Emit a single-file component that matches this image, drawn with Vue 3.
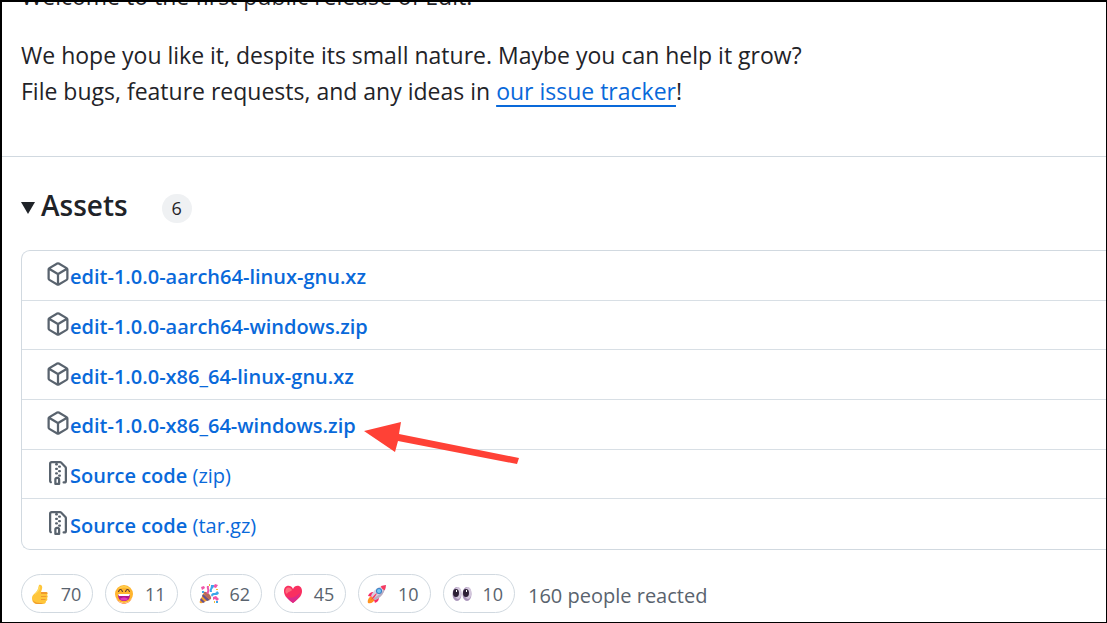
<template>
	<main class="release">
		<section class="notes">
			<p>Welcome to the first public release of Edit.</p>
			<p>
				We hope you like it, despite its small nature. Maybe you can help it grow?<br />
				File bugs, feature requests, and any ideas in
				<a href="#issues">our issue tracker</a>!
			</p>
		</section>

		<section class="release-footer">
			<details class="assets" open>
				<summary>
					<svg class="caret" viewBox="0 0 14 12" aria-hidden="true">
						<path d="M0 0h14L7 12z" />
					</svg>
					<h2>Assets</h2>
					<span class="counter">6</span>
				</summary>
				<ul class="asset-list">
					<li v-for="asset in assets" :key="asset.name + asset.format">
						<svg class="asset-icon" viewBox="0 0 16 16" aria-hidden="true">
							<path :d="icons[asset.icon]" />
						</svg>
						<a href="#download">
							<strong>{{ asset.name }}</strong>
							<span v-if="asset.format"> ({{ asset.format }})</span>
						</a>
						<svg v-if="asset.marked" class="arrow" viewBox="0 0 156 40" aria-hidden="true">
							<path d="M0 10 37 1 35 13 155 37 153 43 34 20 31 31z" />
						</svg>
					</li>
				</ul>
			</details>

			<div class="reactions">
				<div class="reaction-list">
					<button
						v-for="reaction in reactions"
						:key="reaction.name"
						type="button"
						:aria-label="reaction.name + ' ' + reaction.count"
					>
						<svg viewBox="0 0 20 20" aria-hidden="true">
							<path
								v-for="(shape, index) in reaction.shapes"
								:key="index"
								:d="shape[1]"
								:fill="shape[0]"
							/>
						</svg>
						<span>{{ reaction.count }}</span>
					</button>
				</div>
				<span class="total">160 people reacted</span>
			</div>
		</section>
	</main>
</template>

<script setup>
import { ref } from 'vue'

const icons = {
	package:
		'm8.878.392 5.25 3.045c.54.314.872.89.872 1.514v6.098a1.75 1.75 0 0 1-.872 1.514l-5.25 3.045a1.75 1.75 0 0 1-1.756 0l-5.25-3.045A1.75 1.75 0 0 1 1 11.049V4.951c0-.624.332-1.201.872-1.514L7.122.392a1.75 1.75 0 0 1 1.756 0ZM7.875 1.69l-4.63 2.685L8 7.133l4.755-2.758-4.63-2.685a.248.248 0 0 0-.25 0ZM2.5 5.677v5.372c0 .09.047.171.125.216l4.625 2.683V8.432Zm6.25 8.271 4.625-2.683a.25.25 0 0 0 .125-.216V5.677L8.75 8.432Z',
	zip: 'M3.5 1.75v11.5c0 .09.048.173.126.217a.75.75 0 0 1-.752 1.298A1.748 1.748 0 0 1 2 13.25V1.75C2 .784 2.784 0 3.75 0h5.586c.464 0 .909.185 1.237.513l2.914 2.914c.329.328.513.773.513 1.237v8.586A1.75 1.75 0 0 1 12.25 15h-.5a.75.75 0 0 1 0-1.5h.5a.25.25 0 0 0 .25-.25V4.664a.25.25 0 0 0-.073-.177L9.513 1.573a.25.25 0 0 0-.177-.073H7.25a.75.75 0 0 1 0 1.5h-.5a.75.75 0 0 1 0-1.5h-3a.25.25 0 0 0-.25.25Zm3.75 8.75h.5c.966 0 1.75.784 1.75 1.75v3a.75.75 0 0 1-.75.75h-2.5a.75.75 0 0 1-.75-.75v-3c0-.966.784-1.75 1.75-1.75ZM6 5.25a.75.75 0 0 1 .75-.75h.5a.75.75 0 0 1 0 1.5h-.5A.75.75 0 0 1 6 5.25Zm.75 2.25h.5a.75.75 0 0 1 0 1.5h-.5a.75.75 0 0 1 0-1.5ZM8 6.75A.75.75 0 0 1 8.75 6h.5a.75.75 0 0 1 0 1.5h-.5A.75.75 0 0 1 8 6.75ZM8.75 3h.5a.75.75 0 0 1 0 1.5h-.5a.75.75 0 0 1 0-1.5ZM8 9.75A.75.75 0 0 1 8.75 9h.5a.75.75 0 0 1 0 1.5h-.5A.75.75 0 0 1 8 9.75Zm-1 2.5v2.25h1v-2.25a.25.25 0 0 0-.25-.25h-.5a.25.25 0 0 0-.25.25Z',
}

const assets = ref([
	{ name: 'edit-1.0.0-aarch64-linux-gnu.xz', icon: 'package' },
	{ name: 'edit-1.0.0-aarch64-windows.zip', icon: 'package' },
	{ name: 'edit-1.0.0-x86_64-linux-gnu.xz', icon: 'package' },
	{ name: 'edit-1.0.0-x86_64-windows.zip', icon: 'package', marked: true },
	{ name: 'Source code', format: 'zip', icon: 'zip' },
	{ name: 'Source code', format: 'tar.gz', icon: 'zip' },
])

// shapes: [fill, path], drawn back to front
const reactions = ref([
	{
		name: 'thumbs up',
		count: 70,
		shapes: [
			['#ffc63b', 'M9 1c2-1 4 1 3 4l-1 3h5c2 0 2 2 1 3 1 1 1 2 0 3 1 1 0 3-1 3 0 2-1 3-3 3H8c-4 0-6-2-6-6 0-4 5-5 6-9z'],
			['#f09a2e', 'M11 8h5c1 0 2 1 1 2h-6zM11 12h6l-1 1h-5zM11 15h5l-1 1h-4zM3 16c2 3 5 3 10 3-1 1-2 1-5 1-3 0-5-2-5-4z'],
			['#ffdb62', 'M9 2l1 1c0 4-3 5-5 8-1-1 3-4 4-9z'],
		],
	},
	{
		name: 'laugh',
		count: 11,
		shapes: [
			['#ffb52e', 'M10 1a9 9 0 1 0 0 18 9 9 0 0 0 0-18z'],
			['#ff863f', 'M2 13c2 8 14 8 16 0-1 9-15 9-16 0z'],
			['#ffd150', 'M4 5c3-4 9-4 12 0-4-2-8-2-12 0z'],
			['#4c2e30', 'M4 8c1-4 4-4 5 0H8C7 5 6 5 5 8zM11 8c1-4 4-4 5 0h-1c-1-3-2-3-3 0z'],
			['#b0178e', 'M4 10h12c0 5-2 7-6 7s-6-2-6-7z'],
			['#fff', 'M4 10h12l-1 2H5z'],
			['#e33abc', 'M6 15c2-2 6-2 8 0-2 2-6 2-8 0z'],
		],
	},
	{
		name: 'hooray',
		count: 62,
		shapes: [
			['#f8a12a', 'M5 8l7 7-9 4c-2 1-3-1-2-2z'],
			['#65518f', 'M4 10l7 6-3 1-5-5zM2 14l4 4-2 1-3-3z'],
			['#b56a5c', 'M5 8c3-1 8 4 7 7-2 1-8-4-7-7z'],
			['#ef56a9', 'M2 3l3-1 1 2-3 2zM7 9c3-3 0-4 1-7h2c-1 3 2 4-1 8zM16 0l3 1-2 3-3-1zM14 13l3-1 3 3-2 2-2-2-2 1z'],
			['#39a6ea', 'M11 8c-1-3 1-3 1-7h3c0 4-3 3-2 7zM12 11c2-4 4 0 6-4l2 2c-2 4-5 0-7 4zM3 7h2v2H3zM17 17h2v2h-2z'],
			['#f6b735', 'M10 0h1v2h-1zM17 5h2v1h-2zM15 17h1v2h-1z'],
		],
	},
	{
		name: 'heart',
		count: 45,
		shapes: [
			['#f92f60', 'M10 19C3 14 1 11 1 7c0-6 7-7 9-2 2-5 9-4 9 2 0 4-2 7-9 12z'],
			['#ff6b7d', 'M3 5c2-3 5-1 6 1-1 2-4 1-5 4-2-1-2-3-1-5z'],
			['#db2a8b', 'M10 19c-3-2-5-4-6-6 5 2 9 0 13-4-1 4-3 7-7 10z'],
		],
	},
	{
		name: 'rocket',
		count: 10,
		shapes: [
			['#ff921f', 'M1 19c-1-3 1-6 4-7l3 3c-1 3-4 5-7 4z'],
			['#f72c69', 'M7 8c-4 0-5 2-6 4l5 1zM12 13c0 4-2 5-4 6l-2-6z'],
			['#d9cddf', 'M4 12c2-6 8-10 15-11-1 7-5 13-11 15z'],
			['#b9acc2', 'M6 14c6-2 10-6 13-13-1 7-5 13-11 15z'],
			['#f8395f', 'M14 2l5-1-1 5c-2 0-4-2-4-4zM4 16c2-4 4-6 6-7-1 3-3 5-6 7z'],
			['#347fc4', 'M12 4a3 3 0 1 0 0 6 3 3 0 0 0 0-6z'],
			['#77c8f5', 'M12 5a2 2 0 1 0 0 4 2 2 0 0 0 0-4z'],
		],
	},
	{
		name: 'eyes',
		count: 10,
		shapes: [
			['#a994ba', 'M5 3a4.5 7 0 1 0 0 14 4.5 7 0 0 0 0-14zM15 3a4.5 7 0 1 0 0 14 4.5 7 0 0 0 0-14z'],
			['#d3c6dc', 'M6 3a3.5 6 0 1 0 0 12 3.5 6 0 0 0 0-12zM16 3a3.5 6 0 1 0 0 12 3.5 6 0 0 0 0-12z'],
			['#2d2036', 'M4 5a3 4 0 1 0 0 8 3 4 0 0 0 0-8zM14 5a3 4 0 1 0 0 8 3 4 0 0 0 0-8z'],
			['#fff', 'M4 6h1v2H4zM14 6h1v2h-1z'],
		],
	},
])
</script>

<style>
body {
	margin: 0;
	background: #fff;
}
</style>

<style scoped>
.release {
	box-sizing: border-box;
	min-height: 100vh;
	overflow: hidden;
	border: 1px solid #000;
	border-width: 2px 1px 1px 2px;
	font-family: 'Segoe UI', 'Open Sans', 'Noto Sans', sans-serif;
	color: #1f2328;
}

.notes {
	padding: 0 19px 47px;
	border-bottom: 1px solid #d1d9e0;
	font-size: 23px;
	line-height: 36px;
}

.notes p {
	margin: 0 0 23px;
}

.notes p:first-child {
	margin-top: -24px;
}

.notes p:last-child {
	margin-bottom: 0;
}

a {
	color: #0969da;
	text-decoration: none;
}

.notes a {
	text-decoration: underline;
	text-decoration-thickness: 2px;
	text-underline-offset: 5px;
}

.release-footer {
	padding: 24px 0 9px 19px;
}

summary {
	display: flex;
	align-items: center;
	list-style: none;
	cursor: pointer;
}

.caret {
	width: 14px;
	height: 12px;
	margin: 6px 6px 0 0;
	fill: #1f2328;
}

h2 {
	margin: 0 34px 0 0;
	font-size: 28px;
	line-height: 48px;
	font-weight: 600;
}

.counter {
	min-width: 30px;
	margin-top: 6px;
	border-radius: 15px;
	background: #eff1f3;
	font-size: 18px;
	line-height: 29px;
	font-weight: 500;
	text-align: center;
}

.asset-list {
	display: grid;
	grid-auto-rows: 1fr;
	box-sizing: border-box;
	min-height: 300px;
	margin: 21px 0 24px;
	padding: 0;
	border: 1px solid #d1d9e0;
	border-right: 0;
	border-radius: 9px 0 0 9px;
	list-style: none;
	font-size: 20px;
	line-height: 30px;
}

.asset-list li {
	display: flex;
	align-items: center;
	padding-left: 24px;
	border-bottom: 1px solid #d8dfe5;
}

.asset-list li:last-child {
	border-bottom: 0;
}

.asset-list a {
	padding-top: 4px;
}

.asset-list strong {
	font-weight: 600;
}

.asset-icon {
	width: 24px;
	height: 24px;
	margin-bottom: 2px;
	fill: #59636e;
}

.arrow {
	position: relative;
	width: 156px;
	height: 40px;
	margin: 0 0 -34px 8px;
	overflow: visible;
	fill: #ff4136;
}

.reactions {
	display: flex;
	align-items: center;
	gap: 13px;
}

.reaction-list {
	display: grid;
	grid-template-columns: repeat(6, 1fr);
	gap: 12px;
	width: 494px;
}

button {
	display: flex;
	align-items: center;
	justify-content: space-between;
	height: 39px;
	padding: 0 11px 0 8px;
	border: 1px solid #d1d9e0;
	border-radius: 20px;
	background: #fff;
	color: #59636e;
	font-family: inherit;
	font-size: 18px;
	cursor: pointer;
}

button svg {
	width: 20px;
	height: 20px;
}

.total {
	margin-top: 5px;
	color: #59636e;
	font-size: 20px;
	line-height: 30px;
}
</style>
